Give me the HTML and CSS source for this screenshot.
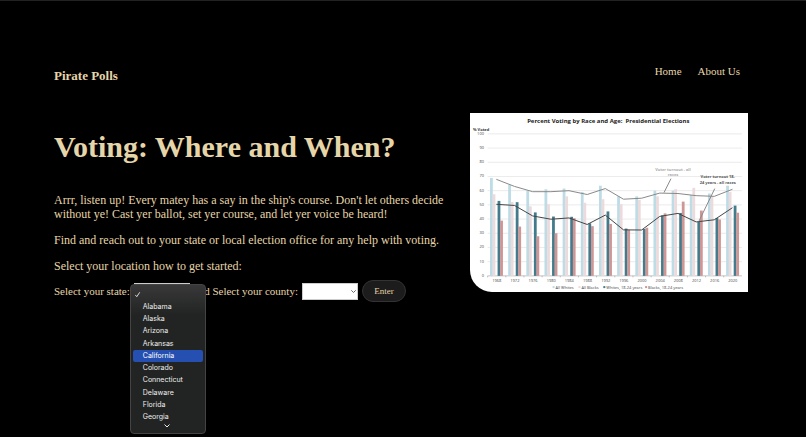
FILE: index.html
```html
<!DOCTYPE html>
<html lang="en">
<head>
  <meta charset="UTF-8">
  <title>Pirate Polls</title>
  <meta name="viewport" content="width=device-width, initial-scale=1.0">
  <link rel="stylesheet" href="styles.css">
</head>
<body>

<header class="header">
  <h2 class="logo">Pirate Polls</h2>
  <nav class="nav">
    <a href="#">Home</a>
    <a href="#">About Us</a>
  </nav>
</header>

<main class="main">
  <section class="intro">
    <h1>Voting: Where and When?</h1>
    <p>Arrr, listen up! Every matey has a say in the ship's course. Don't let others decide without ye! Cast yer ballot, set yer course, and let yer voice be heard!</p>
    <p>Find and reach out to your state or local election office for any help with voting.</p>
    <p>Select your location how to get started:</p>

    <form class="location">
      <label for="state">Select your state:</label>
      <div class="field">
        <select id="state" class="select"></select>
        <div class="menu">
          <div class="option">
            <svg class="check" viewBox="0 0 8 8"><path d="M1.5 4.5 3.2 6.5 6.5 1.5"/></svg>
          </div>
          <div class="option">Alabama</div>
          <div class="option">Alaska</div>
          <div class="option">Arizona</div>
          <div class="option">Arkansas</div>
          <div class="option active">California</div>
          <div class="option">Colorado</div>
          <div class="option">Connecticut</div>
          <div class="option">Delaware</div>
          <div class="option">Florida</div>
          <div class="option">Georgia</div>
          <svg class="more" viewBox="0 0 8 6"><path d="M1.5 1.5 4 4 6.5 1.5"/></svg>
        </div>
      </div>
      <label for="county">and Select your county:</label>
      <div class="field">
        <select id="county" class="select"></select>
        <svg class="arrow" viewBox="0 0 8 6"><path d="M1.5 1.5 4 4 6.5 1.5"/></svg>
      </div>
      <button type="button" class="button">Enter</button>
    </form>
  </section>

  <svg class="chart" id="chart" viewBox="0 0 279 180" role="img">
    <text class="chart-title" x="139" y="10">Percent Voting by Race and Age:&#160; Presidential Elections</text>
    <text class="chart-unit" x="3" y="18">% Voted</text>
    <g id="plot"></g>
    <path class="leader" d="M202 66 195 80M246 76 230 109"/>
    <g class="note note-light">
      <text x="204" y="58">Voter turnout - all</text>
      <text x="204" y="63">races</text>
    </g>
    <g class="note">
      <text x="249" y="65">Voter turnout 18-</text>
      <text x="249" y="71">24 years - all races</text>
    </g>
    <g class="legend">
      <rect class="whites" x="83" y="174" width="2" height="2"/>
      <text x="86" y="177">All Whites</text>
      <rect class="blacks" x="109" y="174" width="2" height="2"/>
      <text x="112" y="177">All Blacks</text>
      <rect class="young-whites" x="134" y="174" width="2" height="2"/>
      <text x="137" y="177">Whites, 18-24 years</text>
      <rect class="young-blacks" x="176" y="174" width="2" height="2"/>
      <text x="179" y="177">Blacks, 18-24 years</text>
    </g>
  </svg>
</main>

<script>
const years = [1968, 1972, 1976, 1980, 1984, 1988, 1992, 1996, 2000, 2004, 2008, 2012, 2016, 2020];

const bars = [
  { name: "whites", offset: 2.4, values: [69, 64, 60, 61, 61.5, 59, 63.5, 56, 56, 60, 60, 57, 58, 63.5] },
  { name: "blacks", offset: 5, values: [57.5, 52, 49, 50.5, 56, 51.5, 54, 50.5, 53.5, 56, 61, 62, 56, 59] },
  { name: "young-whites", offset: 10, values: [52.8, 51.9, 44.7, 41.8, 41.6, 37, 45.4, 33.3, 33, 42.6, 44.3, 38, 40.7, 49.5] },
  { name: "young-blacks", offset: 12.6, values: [38.9, 34.7, 27.9, 30, 40.6, 35, 36.6, 32.4, 33.9, 44, 52.3, 46, 39.7, 44.5] }
];

const lines = [
  { name: "line-all", values: [68, 63, 59.3, 59.3, 60, 57.3, 61.5, 54, 54.7, 58.3, 58, 56.5, 56, 61] },
  { name: "line-young", values: [50.4, 49.6, 42.2, 39.9, 40.8, 36.2, 42.8, 32.4, 32.3, 41.9, 44, 38, 39.5, 48] }
];

const left = 17.7, right = 273.3, bottom = 163.7;
const step = (right - left) / years.length;
const yPos = v => bottom - v * 1.427;

function renderChart() {
  let out = "";
  for (let v = 0; v <= 100; v += 10) {
    out += `<path class="${v ? "grid" : "axis"}" d="M${left} ${yPos(v)}H${right}"/>`;
    out += `<text class="tick tick-y" x="14" y="${yPos(v) + 1}">${v}</text>`;
  }
  bars.forEach(b => {
    b.values.forEach((v, i) => {
      out += `<rect class="${b.name}" x="${left + i * step + b.offset}" y="${yPos(v)}" width="2.8" height="${v * 1.427}"/>`;
    });
  });
  years.forEach((year, i) => {
    out += `<path class="axis" d="M${left + i * step} ${bottom}v1.5"/>`;
    out += `<text class="tick" x="${left + (i + 0.5) * step}" y="170">${year}</text>`;
  });
  lines.forEach(l => {
    const points = l.values.map((v, i) => `${left + (i + 0.48) * step},${yPos(v)}`).join(" ");
    out += `<polyline class="${l.name}" points="${points}"/>`;
  });
  document.getElementById("plot").innerHTML = out;
}

renderChart();
</script>
</body>
</html>
```

FILE: styles.css
```css
body {
  font-family: "Liberation Serif", "Times New Roman", serif;
  font-size: 12px;
  line-height: 14px;
  background: #000;
  color: #e6d5a9;
  margin: 0;
  padding: 64px 58px 0 54px;
  border-top: 1px solid #222;
  box-sizing: border-box;
  min-height: 100vh;
}
.header {
  display: flex;
  justify-content: space-between;
  align-items: flex-start;
  height: 48px;
}
.logo {
  font-size: 13px;
  line-height: 22px;
  margin: 0;
}
.nav {
  display: flex;
  gap: 16px;
  padding-right: 8px;
  font-size: 11px;
  line-height: 12px;
}
.nav a {
  color: inherit;
  text-decoration: none;
}
.main {
  display: flex;
  align-items: flex-start;
  justify-content: space-between;
  gap: 24px;
}
.intro { flex: 1; }
h1 {
  font-size: 30px;
  line-height: 36px;
  margin: 16px 0 28px;
}
p { margin: 0 0 12px; }
.location {
  display: flex;
  align-items: center;
  white-space: nowrap;
  font-size: 11px;
  margin-top: -5px;
}
.field {
  position: relative;
  display: flex;
  margin: 0 4px;
}
.select {
  appearance: none;
  width: 56px;
  height: 17px;
  background: #fff;
  border: 1px solid #ccc;
  border-radius: 0;
  padding: 0;
}
.arrow {
  position: absolute;
  right: 1px;
  top: 6px;
  width: 7px;
  stroke: #555;
}
.arrow, .more, .check { fill: none; }
.button {
  font-family: inherit;
  font-size: 9px;
  color: #e6d5a9;
  background: #1c1c1c;
  border: 1px solid #333;
  border-radius: 11px;
  width: 44px;
  height: 22px;
  padding: 0;
}

/* open state menu */
.menu {
  position: absolute;
  left: -4px;
  top: 1px;
  z-index: 1;
  box-sizing: border-box;
  width: 76px;
  height: 150px;
  padding: 4px 2px 3px;
  display: flex;
  flex-direction: column;
  background: linear-gradient(#383838, #222423 30px);
  border: 1px solid #444;
  border-radius: 4px;
  color: #eee;
  font-family: Inter, sans-serif;
  font-size: 7px;
}
.option {
  flex: 1;
  display: flex;
  align-items: center;
  padding-left: 10px;
  border-radius: 2px;
  line-height: 12px;
}
.active {
  background: #254fb0;
  color: #fff;
}
.check {
  width: 7px;
  margin-left: -9px;
  stroke: #eee;
}
.more {
  width: 8px;
  height: 6px;
  margin-left: 30px;
  stroke: #eee;
}

/* chart */
.chart {
  width: 40%;
  flex: none;
  background: #fff;
  border-bottom-left-radius: 22px;
  font-family: "Open Sans", sans-serif;
}
.chart-title {
  font-size: 6px;
  font-weight: bold;
  fill: #222;
  text-anchor: middle;
}
.chart-unit {
  font-size: 4px;
  font-weight: bold;
  fill: #333;
}
.tick {
  font-size: 4px;
  fill: #444;
  text-anchor: middle;
}
.tick-y { text-anchor: end; }
.grid, .axis {
  stroke: #ddd;
  stroke-width: 0.6;
}
.axis { stroke: #999; }
.whites { fill: #bddce5; }
.blacks { fill: #eddadc; }
.young-whites { fill: #437b8c; }
.young-blacks { fill: #ce9695; }
.line-all, .line-young, .leader {
  fill: none;
  stroke: #888;
  stroke-width: 1;
}
.line-young { stroke: #444; }
.note {
  font-size: 4px;
  font-weight: bold;
  fill: #555;
  text-anchor: middle;
}
.note-light { fill: #aaa; }
.legend {
  font-size: 4px;
  fill: #444;
}
```
